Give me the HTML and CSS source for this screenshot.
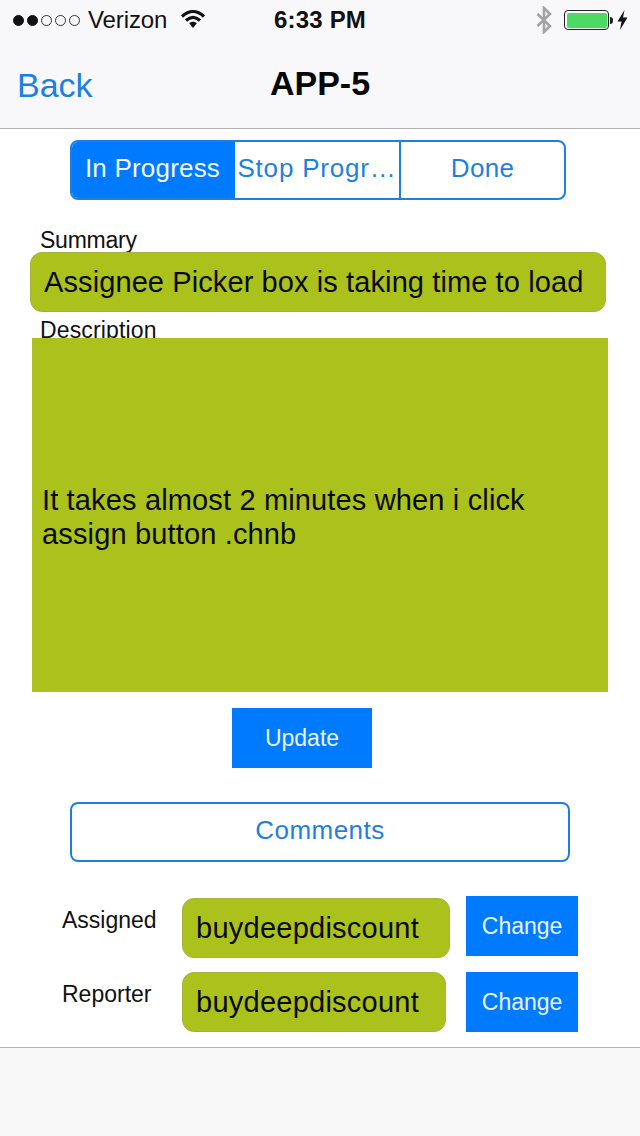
FILE: index.html
```html
<!DOCTYPE html>
<html lang="en">
<head>
<meta charset="utf-8">
<title>APP-5</title>
<link rel="stylesheet" href="styles.css">
</head>
<body>
<div class="screen">
  <header class="top">
    <div class="status">
      <div class="status-left">
        <div class="signal">
          <span class="dot on"></span><span class="dot on"></span><span class="dot"></span><span class="dot"></span><span class="dot"></span>
        </div>
        <span class="carrier">Verizon</span>
        <svg class="wifi" width="26" height="20" viewBox="0 0 26 20">
          <path class="wifi-arc" d="M2 7.5C9 1 17 1 24 7.5"/>
          <path class="wifi-arc" d="M6 11.5C10.5 7.5 15.5 7.5 20 11.5"/>
          <path class="wifi-fill" d="M9.2 14.3C11.5 12.3 14.5 12.3 16.8 14.3L13 19Z"/>
        </svg>
      </div>
      <span class="time">6:33 PM</span>
      <div class="status-right">
        <svg class="bt" width="18" height="28" viewBox="0 0 18 28">
          <path d="M2.5 8L15 20L9 26V2L15 8L2.5 20"/>
        </svg>
        <div class="battery"><div class="battery-level"></div></div>
        <div class="battery-nub"></div>
        <svg class="bolt" width="11" height="20" viewBox="0 0 11 20">
          <path d="M7.5 0L0.5 11.5H4.5L3 20L10.5 7.5H6Z"/>
        </svg>
      </div>
    </div>
    <nav class="nav">
      <a class="back">Back</a>
      <h1 class="title">APP-5</h1>
    </nav>
  </header>

  <main class="content">
    <div class="segments">
      <div class="segment active">In Progress</div>
      <div class="segment middle">Stop Progr…</div>
      <div class="segment last">Done</div>
    </div>

    <label class="label summary-label">Summary</label>
    <div class="field summary">Assignee Picker box is taking time to load</div>

    <label class="label description-label">Description</label>
    <div class="description">
      <p class="description-text">It takes almost 2 minutes when i click assign button .chnb</p>
    </div>

    <button class="action update">Update</button>
    <button class="comments">Comments</button>

    <div class="person first">
      <span class="person-label">Assigned</span>
      <div class="field person-field wide">buydeepdiscount</div>
      <button class="action change">Change</button>
    </div>
    <div class="person second">
      <span class="person-label">Reporter</span>
      <div class="field person-field narrow">buydeepdiscount</div>
      <button class="action change">Change</button>
    </div>
  </main>

  <footer class="bottom"></footer>
</div>
</body>
</html>
```
FILE: styles.css
```css
* { box-sizing: border-box; }
html, body { margin: 0; padding: 0; }
body {
  background: #fff;
  font-family: "Liberation Sans", Arial, sans-serif;
  color: #0a0a0a;
}
.screen {
  width: 640px;
  height: 1136px;
  display: flex;
  flex-direction: column;
  overflow: hidden;
}
.top {
  height: 129px;
  flex: none;
  background: #f8f8fa;
  border-bottom: 1px solid #b2b2b4;
}
.status {
  height: 40px;
  position: relative;
  display: flex;
  align-items: center;
  justify-content: space-between;
  padding: 0 12px 0 13px;
}
.status-left { display: flex; align-items: center; }
.signal { display: flex; gap: 3px; }
.dot {
  width: 11px;
  height: 11px;
  border-radius: 50%;
  border: 1px solid #333;
}
.dot.on { background: #111; border-color: #111; }
.carrier { font-size: 24px; margin-left: 8px; letter-spacing: -0.1px; color: #111; }
.wifi { margin-left: 13px; margin-top: -2px; }
.wifi-arc { fill: none; stroke: #111; stroke-width: 3.2; }
.wifi-fill { fill: #111; }
.time {
  position: absolute;
  left: 0;
  right: 0;
  text-align: center;
  font-size: 24px;
  font-weight: 700;
  letter-spacing: 0.2px;
  color: #111;
}
.status-right { display: flex; align-items: center; }
.bt { fill: none; stroke: #a3a3a5; stroke-width: 2.6; margin-right: 11px; }
.battery {
  width: 45px;
  height: 20px;
  border: 1.5px solid #222;
  border-radius: 4px;
  padding: 1.5px;
}
.battery-level { height: 100%; background: #4cd964; border-radius: 2px; }
.battery-nub {
  width: 3px;
  height: 7px;
  background: #222;
  border-radius: 0 3px 3px 0;
  margin-left: 1px;
}
.bolt { fill: #111; margin-left: 4px; }
.nav {
  height: 88px;
  position: relative;
  display: flex;
  align-items: center;
  padding: 0 0 0 17px;
}
.back { font-size: 34px; color: #1c7fe2; position: relative; top: 1px; }
.title {
  position: absolute;
  left: 0;
  right: 0;
  margin: 0;
  text-align: center;
  font-size: 34px;
  font-weight: 700;
  color: #060606;
  top: 24px;
}
.content {
  flex: 1;
  display: flex;
  flex-direction: column;
  align-items: flex-start;
  padding-top: 11px;
}
.segments {
  width: 496px;
  height: 60px;
  margin-left: 70px;
  display: flex;
  border: 2px solid #1f7fe0;
  border-radius: 8px;
  overflow: hidden;
  font-size: 26px;
  letter-spacing: 0.2px;
  color: #1f7fe0;
}
.segment {
  flex: none;
  display: flex;
  align-items: center;
  justify-content: center;
  white-space: nowrap;
  padding-bottom: 3px;
}
.segment.active {
  width: 165px;
  background: #007aff;
  color: #f2f8ff;
  margin: -2px 0 -2px -2px;
}
.segment.middle { width: 166px; border-right: 2px solid #1f7fe0; letter-spacing: 0.8px; }
.segment.last { flex: 1; letter-spacing: 0.3px; }
.label { font-size: 23px; line-height: 26px; color: #111; margin-left: 40px; }
.summary-label { margin-top: 27px; height: 26px; letter-spacing: -0.25px; }
.field {
  background: #abc11c;
  border: 1px solid #a6b43a;
  border-radius: 12px;
  height: 60px;
  display: flex;
  align-items: center;
  padding-left: 13px;
  font-size: 29px;
  letter-spacing: 0.1px;
  color: #0a0a0a;
}
.summary { width: 576px; margin-left: 30px; margin-top: -1px; }
.description-label { margin-top: 5px; height: 26px; letter-spacing: 0.15px; }
.description {
  width: 576px;
  height: 354px;
  margin: -5px 0 0 32px;
  background: #abc11c;
  display: flex;
  align-items: center;
  padding: 4px 60px 0 10px;
  position: relative;
}
.description-text { margin: 0; font-size: 29px; line-height: 34px; letter-spacing: 0.15px; color: #0a0a0a; }
button { font-family: inherit; border: 0; padding: 0; }
.action { background: #007aff; color: #e8f3ff; font-size: 23px; }
.update { width: 140px; height: 60px; margin: 16px 0 0 232px; }
.comments {
  width: 500px;
  height: 60px;
  margin: 34px 0 0 70px;
  padding-bottom: 4px;
  background: #fff;
  border: 2px solid #1f7fe0;
  border-radius: 8px;
  color: #1f7fe0;
  font-size: 26px;
  letter-spacing: 0.45px;
}
.person { display: flex; align-items: flex-start; margin-left: 62px; height: 60px; }
.person.first { margin-top: 34px; }
.person.second { margin-top: 16px; }
.person-label { width: 120px; font-size: 23px; color: #111; }
.first .person-field { margin-top: 2px; }
.first .person-label { padding-top: 11px; }
.second .person-label { padding-top: 9px; }
.person-field { letter-spacing: 0.25px; }
.wide { width: 268px; margin-right: 16px; }
.narrow { width: 264px; margin-right: 20px; }
.change { width: 112px; height: 60px; letter-spacing: -0.05px; }
.bottom {
  height: 89px;
  flex: none;
  background: #f8f8f8;
  border-top: 1px solid #b2b2b2;
}
```
